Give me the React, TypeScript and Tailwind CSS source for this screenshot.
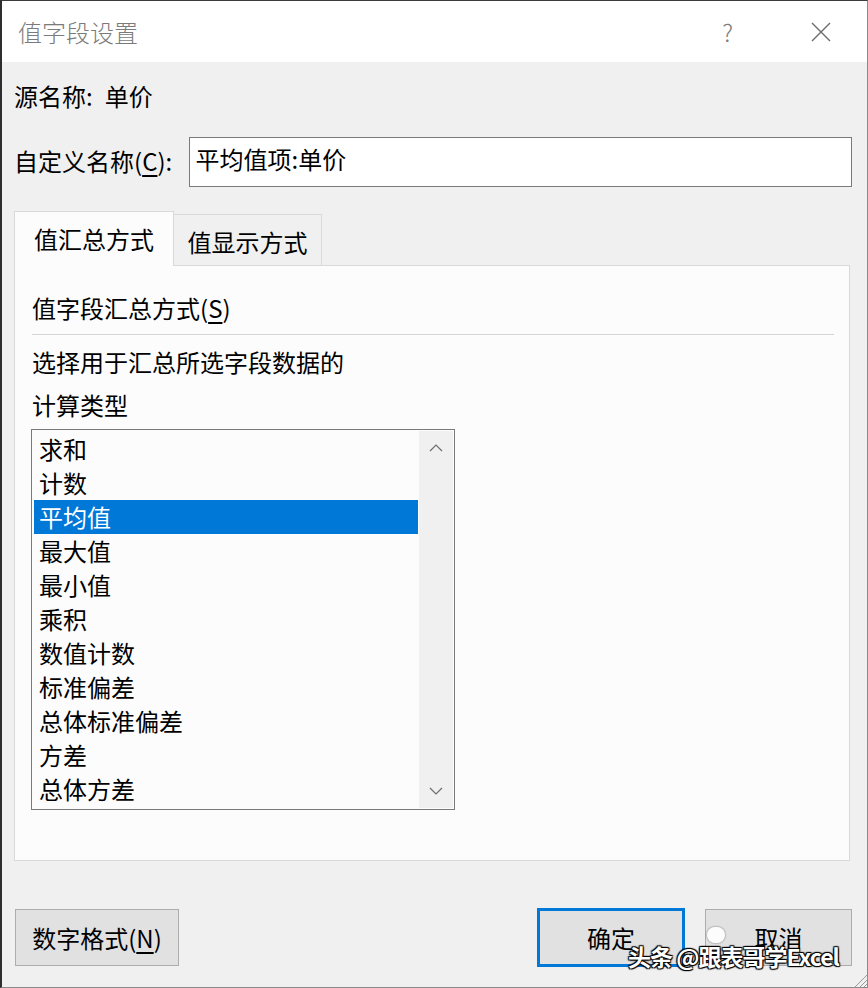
import React from "react";

const items = [
  "求和",
  "计数",
  "平均值",
  "最大值",
  "最小值",
  "乘积",
  "数值计数",
  "标准偏差",
  "总体标准偏差",
  "方差",
  "总体方差",
];

const font = { fontFamily: '"Microsoft YaHei", "Noto Sans CJK SC", "Noto Sans", sans-serif' };

export default function App() {
  return (
    <div
      className="relative w-[868px] h-[988px] overflow-hidden bg-[#f0f0f0] text-black border-t border-t-[#3a3a3a] border-l-2 border-l-[#2e2e2e] border-r border-r-[#8a8a8a] border-b border-b-[#8a8a8a]"
      style={font}
    >
      {/* Title bar */}
      <div className="h-[61px] bg-white flex items-center pl-[16px]">
        <span className="text-[24px] leading-[30px] text-[#7b7b7b] font-light">值字段设置</span>
        <div className="flex-1" />
        <span className="text-[24px] leading-[30px] text-[#7b7b7b] mr-[78px] font-light">?</span>
        <svg width="20" height="20" viewBox="0 0 20 20" className="mr-[36px]">
          <path d="M1 1 L19 19 M19 1 L1 19" stroke="#6b6b6b" strokeWidth="1.4" fill="none" />
        </svg>
      </div>

      <div className="pl-[12px] pr-[15px]">
        {/* Source name */}
        <div className="mt-[17px] h-[34px] flex items-center text-[24px]">
          <span>源名称:</span>
          <span className="ml-[12px]">单价</span>
        </div>

        {/* Custom name */}
        <div className="mt-[24px] flex items-center">
          <span className="text-[24px] leading-[34px] w-[176px] pb-[3px]">
            自定义名称(<span className="underline underline-offset-4">C</span>):
          </span>
          <div className="w-[669px] h-[50px] bg-white border border-[#7a7a7a] flex items-center pl-[6px] pb-[6px] text-[24px]">
            平均值项:单价
          </div>
        </div>

        {/* Tabs */}
        <div className="mt-[24px] flex items-end">
          <div className="w-[160px] h-[55px] bg-[#fcfcfc] border border-[#d9d9d9] border-b-0 flex items-center justify-center text-[24px] relative z-10 -mb-px pb-[1px]">
            值汇总方式
          </div>
          <div className="w-[148px] h-[51px] bg-[#f0f0f0] border border-[#d9d9d9] border-l-0 border-b-0 flex items-center justify-center text-[24px] pt-[3px]">
            值显示方式
          </div>
        </div>

        {/* Panel */}
        <div className="w-[836px] h-[596px] bg-[#fcfcfc] border border-[#d9d9d9] pl-[17px] pr-[14px]">
          <div className="mt-[25px] text-[24px] leading-[34px]">
            值字段汇总方式(<span className="underline underline-offset-4">S</span>)
          </div>
          <div className="mt-[9px] h-px bg-[#d5d5d5] w-[802px]" />
          <div className="mt-[10px] text-[24px] leading-[34px]">选择用于汇总所选字段数据的</div>
          <div className="mt-[9px] text-[24px] leading-[34px]">计算类型</div>

          {/* List box */}
          <div className="mt-[7px] -ml-[1px] w-[424px] h-[381px] bg-[#fcfcfc] border border-[#7a7a7a] flex">
            <div className="flex-1 pt-[2px] pl-[2px] pr-[1px]">
              {items.map((it) => (
                <div
                  key={it}
                  className={
                    it === "平均值"
                      ? "h-[34px] flex items-center pl-[5px] bg-[#0078d7] text-white text-[24px]"
                      : "h-[34px] flex items-center pl-[5px] text-[24px]"
                  }
                >
                  {it}
                </div>
              ))}
            </div>
            <div className="w-[34px] my-[1px] mr-[1px] bg-[#f0f0f0] flex flex-col items-center justify-between py-[12px]">
              <svg width="14" height="9" viewBox="0 0 14 9">
                <path d="M1 8 L7 2 L13 8" stroke="#6e6e6e" strokeWidth="1.2" fill="none" />
              </svg>
              <svg width="14" height="9" viewBox="0 0 14 9">
                <path d="M1 1 L7 7 L13 1" stroke="#6e6e6e" strokeWidth="1.2" fill="none" />
              </svg>
            </div>
          </div>
        </div>

        {/* Buttons */}
        <div className="mt-[47px] flex items-center">
          <div className="ml-[1px] w-[164px] h-[57px] bg-[#e1e1e1] border border-[#adadad] flex items-center justify-center text-[24px]">
            数字格式(<span className="underline underline-offset-4">N</span>)
          </div>
          <div className="flex-1" />
          <div className="w-[148px] h-[59px] bg-[#e1e1e1] border-[3px] border-[#0078d7] flex items-center justify-center text-[24px]">
            确定
          </div>
          <div className="ml-[20px] w-[147px] h-[57px] bg-[#e1e1e1] border border-[#adadad] flex items-center justify-center text-[24px]">
            取消
          </div>
        </div>
      </div>

      {/* Watermark overlay */}
      <div className="absolute left-[705px] top-[926px] w-[18px] h-[16px] rounded-full bg-white/90 shadow-[0_0_2px_rgba(0,0,0,0.6)]" />
      <div
        className="absolute left-[626px] top-[940px] text-[23px] leading-[30px] text-white font-bold tracking-[-1px]"
        style={{ textShadow: "1px 1px 1px #000, -1px -1px 1px #000, 1px -1px 1px #000, -1px 1px 1px #000" }}
      >
        头条 @跟表哥学Excel
      </div>

      {/* Resize grip */}
      <svg className="absolute right-0 bottom-0" width="16" height="16" viewBox="0 0 16 16">
        <path d="M16 4 L4 16 M16 9 L9 16 M16 13 L13 16" stroke="#9a9a9a" strokeWidth="1" />
      </svg>
    </div>
  );
}
